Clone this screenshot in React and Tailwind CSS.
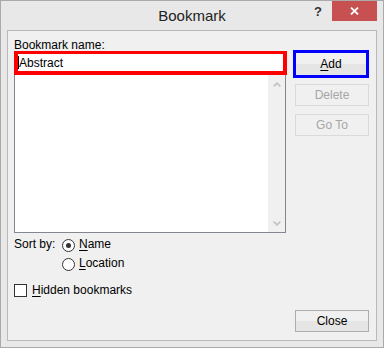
import React from 'react';

const U = ({ children }) => (
  <span className="underline underline-offset-[2px] decoration-1">{children}</span>
);

function Radio({ checked }) {
  return (
    <span className="w-[13px] h-[13px] shrink-0 rounded-full border border-[#333333] bg-white flex items-center justify-center">
      {checked && <span className="w-[5px] h-[5px] rounded-full bg-[#333333]" />}
    </span>
  );
}

function Chevron({ down }) {
  return (
    <svg width="8" height="5" viewBox="0 0 8 5" className="block">
      <polyline
        points={down ? '0.7,0.6 4,3.9 7.3,0.6' : '0.7,4.4 4,1.1 7.3,4.4'}
        fill="none"
        stroke="#c2c2c2"
        strokeWidth="1.6"
      />
    </svg>
  );
}

export default function App() {
  return (
    <div className="w-[384px] h-[348px] border border-[#aaaaaa] bg-[#e8e8e8] px-[6px] flex flex-col font-['Liberation_Sans',Arial,sans-serif] text-[12px] text-black select-none">
      {/* title bar */}
      <div className="h-[29px] shrink-0 grid grid-cols-[1fr_auto_1fr]">
        <div />
        <div className="text-[15px] leading-[29px] text-[#222222]">Bookmark</div>
        <div className="flex justify-end items-start">
          <span className="mt-[4px] mr-[10px] text-[13px] leading-[13px] font-bold text-[#333333]">?</span>
          <div className="w-[45px] h-[20px] bg-[#c75050] flex items-center justify-center">
            <svg width="9" height="8" viewBox="0 0 9 8">
              <path d="M1 0.6 L8 7.4 M8 0.6 L1 7.4" stroke="#ffffff" strokeWidth="1.8" fill="none" />
            </svg>
          </div>
        </div>
      </div>

      {/* client area */}
      <div className="h-[311px] shrink-0 border border-[#b9b9b9] bg-[#f0f0f0] pl-[6px] pr-[7px] flex flex-col">
        <div className="flex items-start gap-[6px]">
          <div className="w-[273px] flex flex-col">
            <div className="pt-[9px] leading-[11px]">
              <U>B</U>ookmark name:
            </div>
            <div className="h-[24px] border-4 border-t-[3px] border-[#ff0000] bg-white flex items-center">
              <span className="w-px h-[13px] bg-black" />
              <span className="leading-[14px] pt-[1px]">Abstract</span>
            </div>
            <div className="w-[272px] h-[158px] border border-t-0 border-[#828790] bg-white flex">
              <div className="flex-1" />
              <div className="w-[17px] bg-[#f0f0f0] flex flex-col items-center justify-between pt-[7px] pb-[6px]">
                <Chevron />
                <Chevron down />
              </div>
            </div>
          </div>

          <div className="w-[76px] mt-[19px] flex flex-col items-end">
            <div className="w-[76px] h-[28px] border-[3px] border-[#0000ff]">
              <div className="h-full bg-linear-to-b from-[#f0f0f0] from-50% to-[#e5e5e5] to-50% flex items-center justify-center leading-[14px]">
                <U>A</U>dd
              </div>
            </div>
            <div className="mt-[6px] w-[74px] h-[22px] border border-[#dadada] flex items-center justify-center text-[#a6a6a6]">
              Delete
            </div>
            <div className="mt-[8px] w-[74px] h-[22px] border border-[#dadada] flex items-center justify-center text-[#a6a6a6]">
              Go To
            </div>
          </div>
        </div>

        {/* sort by */}
        <div className="mt-[5px] h-[14px] flex items-center">
          <span className="w-[48px] leading-[12px] mb-[2px]">Sort by:</span>
          <Radio checked />
          <span className="ml-[4px] leading-[12px] mb-[2px]">
            <U>N</U>ame
          </span>
        </div>
        <div className="mt-[5px] h-[14px] flex items-center pl-[48px]">
          <Radio />
          <span className="ml-[4px] leading-[12px] mb-[2px]">
            <U>L</U>ocation
          </span>
        </div>

        <div className="mt-[12px] h-[14px] flex items-center">
          <span className="w-[13px] h-[13px] border border-[#333333] bg-white" />
          <span className="ml-[5px] leading-[12px]">
            <U>H</U>idden bookmarks
          </span>
        </div>

        <div className="mt-[13px] flex justify-end">
          <div className="w-[74px] h-[22px] border border-[#adadad] bg-linear-to-b from-[#f0f0f0] from-50% to-[#e5e5e5] to-50% flex items-center justify-center">
            Close
          </div>
        </div>
      </div>
    </div>
  );
}
